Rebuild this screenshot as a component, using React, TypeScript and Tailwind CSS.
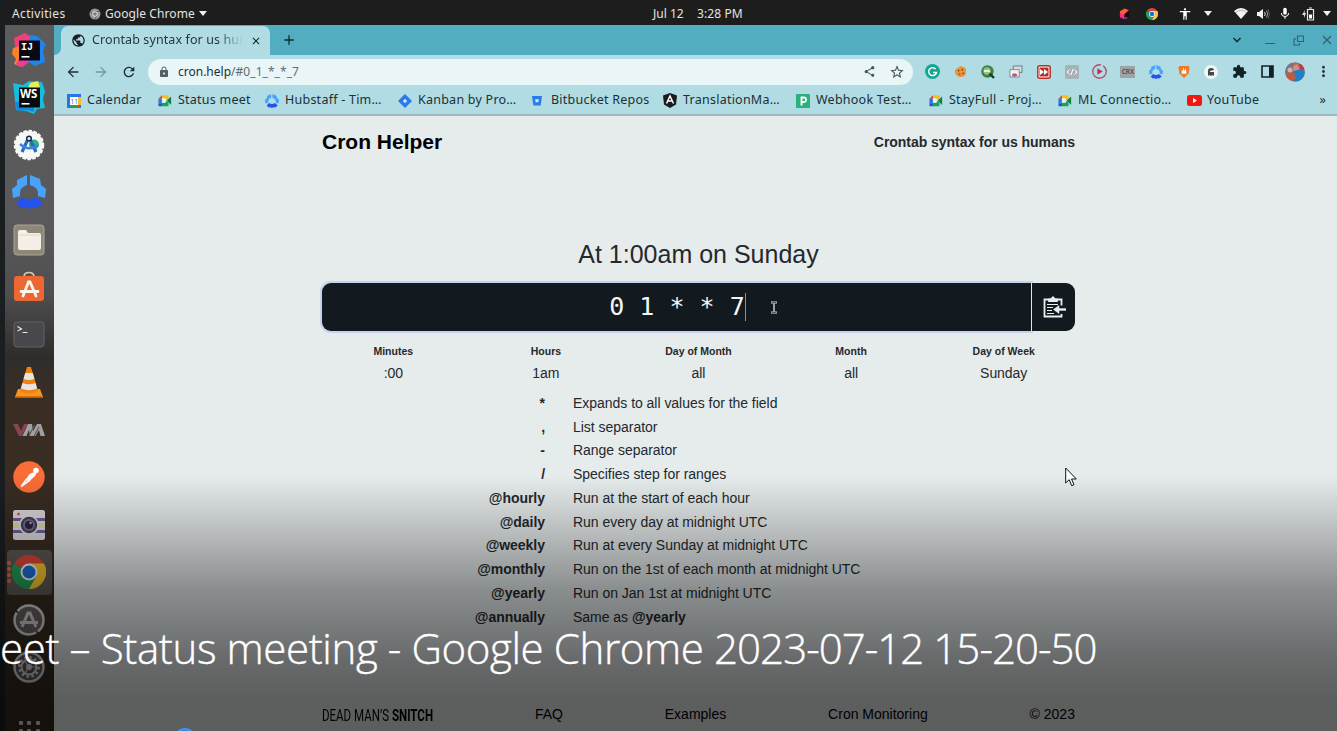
import type { ReactNode } from "react";
import {
  MdArrowBack,
  MdArrowForward,
  MdRefresh,
  MdLock,
  MdShare,
  MdStarOutline,
  MdExtension,
  MdMoreVert,
  MdPublic,
  MdClose,
  MdAdd,
  MdMic,
  MdAccessibility,
} from "react-icons/md";

function Chrome({ className }: { className: string }) {
  return (
    <svg viewBox="0 0 48 48" className={className}>
      <path d="M24 24 3.2 12A24 24 0 0 1 44.8 12Z" fill="#dc4437" />
      <path d="M24 24 44.8 12A24 24 0 0 1 24 48Z" fill="#f9c52b" />
      <path d="M24 24 24 48A24 24 0 0 1 3.2 12Z" fill="#259c57" />
      <path d="M24 12h20.8A24 24 0 0 1 24 48l10.4-18Z" fill="#f9c52b" />
      <path d="M3.2 12 13.6 30 24 36 34.4 30 24 48A24 24 0 0 1 3.2 12Z" fill="#259c57" />
      <circle cx="24" cy="24" r="12" fill="#f4f6f6" />
      <circle cx="24" cy="24" r="9.2" fill="#1b6fd6" />
    </svg>
  );
}

function Hubstaff({ className }: { className: string }) {
  return (
    <svg viewBox="0 0 34 34" className={className}>
      <path d="M15 0 5 5v5L0 14l1 9 7-2q-1-9 7-11Z" fill="#4aa3fb" />
      <path d="M18 0 28 4l1 6 5 4-1 9-7-2q1-9-8-11Z" fill="#4aa3fb" />
      <path d="M4 28 10 22q7 5 14 0l7 6-6 5-4-1-4 2-4-2-4 1Z" fill="#2452ee" />
    </svg>
  );
}

function Meet() {
  return (
    <svg viewBox="0 0 16 14" className="h-[13px] w-[14px]">
      <path d="M4.5 1H12v5H8V4.500H4.500Z" fill="#f7bd16" />
      <path d="M4.500 1v4H.5Z" fill="#e23c31" />
      <path d="M.5 5h4v5h-4Z" fill="#2b76e8" />
      <path d="M.5 10h4v3.500H1.500q-1 0-1-1Z" fill="#155ac0" />
      <path d="M4.500 9.500H8V7l4 2v4.500H4.500Z" fill="#16a358" />
      <path d="M10 7l5-4.500v9.500Z" fill="#0c8044" />
      <path d="M4.500 4.500h4.500v5H4.500Z" fill="#e8f4ee" />
    </svg>
  );
}

function Caret() {
  return (
    <svg viewBox="0 0 8 5" className="h-[5px] w-2">
      <path d="M0 0h8L4 5Z" fill="#f2f2f2" />
    </svg>
  );
}

function Slot({ className, children }: { className: string; children: ReactNode }) {
  return <div className={`flex shrink-0 items-center justify-center ${className}`}>{children}</div>;
}

function TopBar() {
  return (
    <header className="flex h-[25px] shrink-0 items-center rounded-tl-[10px] bg-[#1d1d1d] pt-0.5 font-['Noto_Sans','Open_Sans',sans-serif] text-[12px] text-[#e2e2e2]">
      <span className="w-[84px] pl-[7px] tracking-[0.35px]">Activities</span>
      <svg viewBox="0 0 12 12" className="h-3 w-3">
        <circle cx="6" cy="6" r="5.500" fill="#999" />
        <path d="M6 3.500h5M3.800 7.200 1.500 3M8.200 7.200 6 11" stroke="#555" strokeWidth=".8" />
        <circle cx="6" cy="6" r="2.700" fill="#ddd" />
        <circle cx="6" cy="6" r="1.800" fill="#777" />
      </svg>
      <span className="w-[98px] whitespace-nowrap pl-1 tracking-[0.1px]">Google Chrome</span>
      <Caret />
      <span className="ml-[446px] w-[35px] whitespace-nowrap">Jul 12</span>
      <span className="ml-[9px] whitespace-nowrap tracking-[0.1px]">3:28 PM</span>
      <div className="ml-auto flex items-center">
        <Slot className="w-[28px]">
          <svg viewBox="0 0 12 12" className="h-[12px] w-[11px]">
            <path d="M1 3 6 0l5 2-5 5-5 2Z" fill="#fb5a3c" />
            <path d="M1 5l5 2v5L1 9.500Z" fill="#f22f7e" />
            <path d="M6 6l5-4v7l-5 3Z" fill="#17070f" />
            <path d="M6 9l4 1-4 2Z" fill="#9b39a6" />
          </svg>
        </Slot>
        <Slot className="w-[28px]">
          <Chrome className="h-3 w-3" />
        </Slot>
        <Slot className="w-[38px]">
          <MdAccessibility className="h-[14px] w-[14px] text-white" />
        </Slot>
        <Caret />
        <Slot className="ml-[18px] w-[22px]">
          <svg viewBox="0 0 14 11" className="h-[11px] w-[14px]">
            <path d="M0 3Q7-3 14 3L7 11Z" fill="#f4f4f4" />
            <path d="M1.500 4.500Q7 0 12.500 4.500" stroke="#888" strokeWidth=".6" fill="none" />
          </svg>
        </Slot>
        <Slot className="w-[22px]">
          <svg viewBox="0 0 14 12" className="h-3 w-[14px]" fill="none">
            <path d="M1 4h2l4-3v10L3 8H1Z" fill="#f4f4f4" />
            <path d="M8.500 4q1.500 2 0 4" stroke="#ddd" />
            <path d="M10.500 2.500q2.500 3.500 0 7" stroke="#999" />
            <path d="M12 1q3 5 0 10" stroke="#555" />
          </svg>
        </Slot>
        <Slot className="w-[21px]">
          <MdMic className="h-[15px] w-[14px] text-white" />
        </Slot>
        <Slot className="w-[26px]">
          <svg viewBox="0 0 13 14" className="h-[14px] w-[13px]">
            <path d="M3 3 0 8h2v3l2-5H2.500Z" fill="#ddd" />
            <path d="M5.500 2.500h6v10.500h-6ZM7 1h3" stroke="#e8e8e8" strokeWidth="1.200" fill="none" />
            <path d="M7 7.500h3v4H7Z" fill="#fff" />
          </svg>
        </Slot>
        <div className="mr-[6px] flex w-[10px] justify-end">
          <Caret />
        </div>
      </div>
    </header>
  );
}

const dock: ReactNode[] = [
  <svg viewBox="0 0 34 34" className="h-[34px] w-[34px]">
    <path d="M2 5 13 0l6 4-4 14L4 20Z" fill="#f0407c" />
    <path d="M1 15l8-2 5 18-4 3-8-3 2-5-4-5Z" fill="#fa8030" />
    <path d="M9 22 4 31l6 3 9-6Z" fill="#ea3c9a" />
    <path d="M18 2l7 1 9 8-3 6 2 12-10 4-8-5Z" fill="#1c86ee" />
    <path d="M7 7.500h21v20H7Z" fill="#0b0a12" />
    <text x="9" y="17" fontSize="10" fontWeight="700" fill="#fff" fontFamily="Liberation Mono">IJ</text>
    <path d="M9.500 23h8v1.600h-8Z" fill="#fff" />
  </svg>,
  <svg viewBox="0 0 34 34" className="h-[34px] w-[34px]">
    <path d="M1 3l10 2 6-4 13 1 3 9-2 8 2 9-8 1-3 5-8-3-10-1Z" fill="#18bcdc" />
    <path d="M18 3l8-2 2 7H16Z" fill="#e8ed53" />
    <path d="M3 22l19-1v11l-8-2-9 1Z" fill="#1787dc" />
    <path d="M7 7.500h21v20H7Z" fill="#080b0e" />
    <text x="8" y="18" fontSize="11.500" fontWeight="700" fill="#fff" fontFamily="Open Sans">WS</text>
    <path d="M9.500 23h8v1.600h-8Z" fill="#fff" />
  </svg>,
  <svg viewBox="0 0 32 32" className="h-8 w-8">
    <circle cx="16" cy="16" r="14" fill="#f6f8f8" stroke="#f6f8f8" strokeWidth="2.500" strokeDasharray="3.500 1.500" />
    <circle cx="21" cy="15.500" r="5" fill="#2db875" />
    <path d="M15.500 9 9 23M16.500 9 23 23" stroke="#2b68c5" strokeWidth="3.200" />
    <path d="M7 15q9 8 18 1" stroke="#3985e6" strokeWidth="2.600" fill="none" />
    <circle cx="16" cy="9.500" r="2.300" fill="#dff0f4" stroke="#14303c" strokeWidth="1.500" />
  </svg>,
  <Hubstaff className="h-[34px] w-[34px]" />,
  <svg viewBox="0 0 32 32" className="h-8 w-8">
    <rect x="1" y="1" width="30" height="30" rx="3" fill="#8d8778" stroke="#aaa594" />
    <path d="M5 8q0-2 2-2h6l2 3h11q2 0 2 2v13q0 2-2 2H7q-2 0-2-2Z" fill="#f5efe7" />
    <path d="M6 11h21" stroke="#ddd5ca" />
  </svg>,
  <svg viewBox="0 0 32 32" className="h-8 w-8">
    <path d="M11 6q0-4.500 5-4.500T21 6" stroke="#ddc5a8" strokeWidth="1.700" fill="none" />
    <rect x="1" y="5" width="30" height="25" rx="3" fill="#ed6732" />
    <path d="M10 25 15.500 11h1.500L23 25M8 20.500h17" stroke="#fff5eb" strokeWidth="2.800" strokeLinecap="round" fill="none" />
  </svg>,
  <svg viewBox="0 0 32 28" className="h-7 w-8">
    <rect x="1" y="1" width="30" height="25" rx="3" fill="#47474c" stroke="#626267" />
    <path d="M4.500 5.500 8.500 8 4.500 10M9.500 11.500h5" stroke="#e5e5e5" strokeWidth="1.200" fill="none" />
  </svg>,
  <svg viewBox="0 0 30 34" className="h-[34px] w-[30px]">
    <path d="M4 24h22l3 8H1Z" fill="#f7941e" />
    <path d="M13 2h4l7 24q-9 5-18 0Z" fill="#ef8210" />
    <path d="M11.200 8h7.600l1.700 6q-5.500 2-11 0ZM8.500 18q6.500 2.500 13 0l1.600 5.500q-8 3.500-16.200 0Z" fill="#e7e5e1" />
    <path d="M1 31h28v1.800H1Z" fill="#d56d08" />
  </svg>,
  <svg viewBox="0 0 34 16" className="h-4 w-[34px]">
    <path d="M1 2h5l3 7 3-7h4L9.500 14H7Z" fill="#8a4451" />
    <path d="M10.500 14 16 2h4l1 7 4-7h4l4 12h-4.500L27 8l-3.500 6H18l-1-6-2.500 6Z" fill="#a0a0a2" />
    <path d="M17 14 22.500 3M22 14 27 5" stroke="#5f5f63" strokeWidth="1.200" />
  </svg>,
  <svg viewBox="0 0 32 32" className="h-8 w-8">
    <circle cx="16" cy="16" r="15.700" fill="#fb6d38" />
    <circle cx="23" cy="9.500" r="2.800" fill="#fff" />
    <path d="M21.500 11.500q-4-.5-6.500 3.500l-2 4 3 1.500 6-5.500q1.500-1.500 1-3Z" fill="#fff" />
    <path d="M14 17.500 8.500 25M17 19 8 25.500" stroke="#fff" strokeWidth="1.700" />
  </svg>,
  <svg viewBox="0 0 32 30" className="h-[30px] w-8">
    <rect width="32" height="30" rx="2.500" fill="#d9d7dc" />
    <path d="M0 8h32v3H0ZM0 20h32v3H0Z" fill="#725b99" />
    <path d="M0 13h32v4.500H0Z" fill="#d9d69b" />
    <circle cx="5.500" cy="4" r="1.500" fill="#dc5548" />
    <circle cx="16" cy="15" r="10" fill="#dad9df" />
    <circle cx="16" cy="15" r="8.200" fill="#424052" />
    <circle cx="16" cy="15" r="6" fill="#766792" />
    <circle cx="16" cy="15" r="4" fill="#29243e" />
    <circle cx="17.500" cy="13" r="1.200" fill="#b7a5d4" />
  </svg>,
  <div className="relative flex h-[45px] w-[45px] items-center justify-center rounded-[4px] bg-[#5c5853]">
    <Chrome className="h-[34px] w-[34px]" />
    <div className="absolute left-0 flex flex-col gap-[2px]">
      <i className="h-1 w-1 rounded-full bg-[#dc6a40]" />
      <i className="h-1 w-1 rounded-full bg-[#dc6a40]" />
      <i className="h-1 w-1 rounded-full bg-[#dc6a40]" />
      <i className="h-1 w-1 rounded-full bg-[#dc6a40]" />
    </div>
  </div>,
  <svg viewBox="0 0 32 32" className="h-8 w-8" fill="none">
    <circle cx="16" cy="16" r="14.500" stroke="#d8d8d8" strokeWidth="2.500" fill="#67625f" strokeDasharray="13 2 38 2 36 0" />
    <path d="M9 23 15 9h2l6 14M7 18.500h18" stroke="#d8ced2" strokeWidth="3" />
  </svg>,
  <svg viewBox="0 0 32 32" className="h-8 w-8" fill="none">
    <circle cx="16" cy="16" r="14.500" stroke="#d8d8d8" strokeWidth="2.500" fill="#5a5856" />
    <circle cx="16" cy="16" r="9.500" stroke="#d8d8d8" strokeWidth="3" strokeDasharray="2.500 2.470" />
    <circle cx="16" cy="16" r="7.500" stroke="#d8d8d8" strokeWidth="2" />
    <circle cx="16" cy="16" r="3" fill="#d8d8d8" />
    <path d="M16 16h7M16 16l-4-6M16 16l-4 6" stroke="#d8d8d8" strokeWidth="1.200" />
  </svg>,
];

function Dock() {
  return (
    <nav className="flex w-[49px] shrink-0 flex-col overflow-hidden bg-[linear-gradient(180deg,#5c5c5c_0%,#59595b_28%,#504f50_38%,#2f2d2b_47%,#3a2e24_53%,#36291d_100%)] pt-px">
      {dock.map((icon, i) => (
        <div key={i} className="flex h-[47.500px] shrink-0 items-center justify-center pr-px">
          {icon}
        </div>
      ))}
      <div className="ml-[14px] mt-[30px] grid w-[21px] shrink-0 grid-cols-3 gap-x-[4px] gap-y-[4px]">
        {Array.from({ length: 6 }, (_, i) => (
          <i key={i} className="h-1 w-1 rounded-[1px] bg-[#d4d4d4]" />
        ))}
      </div>
    </nav>
  );
}

function TabStrip() {
  return (
    <div className="flex h-[30px] shrink-0 bg-[#52adc1]">
      <div className="w-[7px] bg-[#b1dce4]">
        <div className="h-full rounded-br-[7px] bg-[#52adc1]" />
      </div>
      <div className="mt-px flex w-[209px] items-center rounded-t-[7px] bg-[#b1dce4] pl-[10px] text-[#26383d]">
        <MdPublic className="h-[15px] w-[15px] text-[#172024]" />
        <span className="ml-[6px] w-[153px] overflow-hidden whitespace-nowrap text-[12.500px] tracking-[0.1px] [mask-image:linear-gradient(90deg,#000_82%,transparent_99%)]">
          Crontab syntax for us humans
        </span>
        <MdClose className="ml-[5px] h-3 w-3 text-[#172024]" />
      </div>
      <div className="flex flex-1 items-center rounded-bl-[7px] bg-[#52adc1]">
        <MdAdd className="ml-[11px] h-4 w-4 text-[#102a30]" />
        <div className="ml-auto flex items-center">
          <Slot className="w-[30px]">
            <svg viewBox="0 0 10 10" className="h-[10px] w-[10px]">
              <path d="M1.500 3 5 6.500 8.500 3" stroke="#15343b" strokeWidth="1.700" fill="none" />
            </svg>
          </Slot>
          <Slot className="w-[36px]">
            <i className="mt-[7px] h-px w-[10px] bg-[#35626c]" />
          </Slot>
          <Slot className="w-[20px]">
            <svg viewBox="0 0 11 11" className="h-[11px] w-[11px]" fill="none" stroke="#35626c" strokeWidth="1.100">
              <path d="M4.500 1h6v5.500h-6ZM3 4H1v6h5.500V8" />
            </svg>
          </Slot>
          <Slot className="mr-[-9px] w-[38px]">
            <svg viewBox="0 0 10 10" className="h-[10px] w-[10px]">
              <path d="M1 1l8 8M9 1 1 9" stroke="#35626c" strokeWidth="1.300" />
            </svg>
          </Slot>
        </div>
      </div>
    </div>
  );
}

const extensions: ReactNode[] = [
  <svg viewBox="0 0 14 14" className="h-[15px] w-[15px]">
    <circle cx="7" cy="7" r="7" fill="#12a78e" />
    <path d="M10 4.800A3.700 3.700 0 1 0 10.700 8H7.500" stroke="#fff" strokeWidth="1.400" fill="none" />
  </svg>,
  <svg viewBox="0 0 14 14" className="h-[13px] w-[13px]">
    <path d="M1 6Q2 3 5 3 6 0 9 2q4 0 4 5 0 6-6 6T1 6Z" fill="#e8953d" />
    <circle cx="5" cy="6" r="1" fill="#7e4318" />
    <circle cx="9" cy="5" r="1" fill="#7e4318" />
    <circle cx="6" cy="10" r="1" fill="#a85b20" />
    <circle cx="10" cy="9" r="1" fill="#7e4318" />
  </svg>,
  <svg viewBox="0 0 14 14" className="h-[14px] w-[14px]">
    <circle cx="6.500" cy="6.500" r="6.200" fill="#37843f" />
    <circle cx="6" cy="6" r="3.700" fill="#99bf85" />
    <path d="M3 6h6" stroke="#e6f2df" strokeWidth="2" />
    <path d="M8.500 8.500 13 13" stroke="#173d20" strokeWidth="2.400" />
  </svg>,
  <svg viewBox="0 0 15 14" className="h-[13px] w-[14px]">
    <path d="M4.500 1h9.500v7H4.500Z" fill="#d5dadd" stroke="#697883" />
    <path d="M1 5h10v8H1Z" fill="#f3f3f3" stroke="#798892" />
    <path d="M3 12a3 3 0 0 1 6 0Z" fill="#df5849" />
    <circle cx="6" cy="11.500" r="1.200" fill="#397cd3" />
  </svg>,
  <svg viewBox="0 0 14 14" className="h-[14px] w-[14px]">
    <rect x=".8" y=".8" width="12.400" height="12.400" rx="2" fill="#fff" stroke="#b62e27" strokeWidth="1.500" />
    <path d="M2.500 2.500h9v9h-9Z" fill="#b62e27" />
    <path d="M3 4l4 3-4 3ZM7 4l4 3-4 3Z" fill="#fff" />
  </svg>,
  <svg viewBox="0 0 14 14" className="h-[14px] w-[14px]" fill="none">
    <rect width="14" height="14" rx="1.500" fill="#a7b2b8" />
    <path d="M4.500 4.500 2 7l2.500 2.500M9.500 4.500 12 7 9.500 9.500M8 4l-2 6" stroke="#fff" />
  </svg>,
  <svg viewBox="0 0 14 14" className="h-[15px] w-[15px]" fill="none">
    <circle cx="7" cy="7" r="6.300" stroke="#b44d67" strokeWidth="1.200" strokeDasharray="31 2" />
    <path d="M5 4l5 3-5 3Z" fill="#c42e4a" />
  </svg>,
  <div className="flex h-3 w-[15px] items-center justify-center bg-[#9ca4a7] text-[6.500px] font-medium text-[#3e4345]">CRX</div>,
  <Hubstaff className="h-[14px] w-[14px]" />,
  <svg viewBox="0 0 12 14" className="h-[13px] w-[12px]">
    <path d="M1 1h10l1 2-1 6-5 5-5-5-1-6Z" fill="#f07a25" />
    <path d="M3.500 6h5v3.500h-5ZM5 3.500h1V6H5ZM7 4h1v2H7Z" fill="#fff" />
  </svg>,
  <svg viewBox="0 0 14 14" className="h-[14px] w-[14px]">
    <circle cx="7" cy="7" r="7" fill="#f1f5f5" />
    <path d="M4 11V6q0-3 3-3t3 2L6 6v1h4v4l-1.500-1L7 11l-1.500-1Z" fill="#41484b" />
  </svg>,
  <MdExtension className="h-[15px] w-[15px] text-[#142124]" />,
  <svg viewBox="0 0 13 13" className="h-[13px] w-[13px]">
    <path d="M1 1h11v11H1Z" stroke="#142124" strokeWidth="1.600" fill="none" />
    <path d="M8 1h4v11H8Z" fill="#142124" />
  </svg>,
  <svg viewBox="0 0 20 20" className="h-5 w-5">
    <clipPath id="avatar">
      <circle cx="10" cy="10" r="9.800" />
    </clipPath>
    <g clipPath="url(#avatar)">
      <path d="M0 0h20v20H0Z" fill="#a96961" />
      <path d="M0 0h7l1 9-8 4Z" fill="#6b7990" />
      <path d="M8 5q4-6 6 1l-1 5H9Z" fill="#d09078" />
      <path d="M9 9q8-3 11 1v6l-8 4-7-3Z" fill="#237fc5" />
      <path d="M3 10l6 1 2 5-3 3-7-4Z" fill="#bc5a42" />
      <path d="M14 2h6v7l-5-2Z" fill="#bc3a44" />
      <circle cx="5" cy="8" r="2.500" fill="#d8b39b" />
    </g>
  </svg>,
  <MdMoreVert className="h-[17px] w-[17px] text-[#233438]" />,
];

function Toolbar() {
  return (
    <div className="flex h-[33px] shrink-0 items-center bg-[#b1dce4] text-[#1e2f34]">
      <Slot className="ml-[4px] w-[29px]">
        <MdArrowBack className="h-4 w-4" />
      </Slot>
      <Slot className="w-[28px]">
        <MdArrowForward className="h-4 w-4 text-[#74979e]" />
      </Slot>
      <Slot className="w-[27px]">
        <MdRefresh className="h-4 w-4" />
      </Slot>
      <div className="ml-[6px] flex h-[26px] w-[766px] items-center rounded-full bg-[#e9f5f7]">
        <MdLock className="ml-[10px] h-3 w-3 text-[#536166]" />
        <span className="ml-[8px] text-[12px]">cron.help</span>
        <span className="text-[12px] tracking-[0.05px] text-[#5d6d72]">/#0_1_*_*_7</span>
        <MdShare className="ml-auto h-[13px] w-[13px] text-[#45545a]" />
        <MdStarOutline className="ml-[13px] mr-[8px] h-4 w-4 text-[#45545a]" />
      </div>
      <div className="ml-[6px] flex">
        {extensions.map((icon, i) => (
          <Slot key={i} className="w-[27.900px]">
            {icon}
          </Slot>
        ))}
      </div>
    </div>
  );
}

function Bookmark({ icon, width, children }: { icon: ReactNode; width: string; children: string }) {
  return (
    <div className={`flex shrink-0 items-center ${width}`}>
      <span className="flex w-[20px] shrink-0">{icon}</span>
      <span className="whitespace-nowrap">{children}</span>
    </div>
  );
}

function Bookmarks() {
  return (
    <div className="flex h-[28px] shrink-0 items-center border-b-2 border-[#9dbbc1] bg-[#b1dce4] pb-px pl-[13px] text-[12.500px] tracking-[0.24px] text-[#1d3035]">
      <Bookmark
        width="w-[91px]"
        icon={
          <svg viewBox="0 0 14 14" className="h-[14px] w-[14px]">
            <path d="M0 0h14v14H0Z" fill="#2974e8" />
            <path d="M11 3h3v8h-3Z" fill="#f4bd28" />
            <path d="M3 11h8v3H3Z" fill="#259e54" />
            <path d="M11 11h3l-3 3Z" fill="#dc4437" />
            <path d="M3 3h8v8H3Z" fill="#fff" />
            <text x="3.500" y="9.500" fontSize="6.500" fill="#2974e8" fontFamily="Roboto" letterSpacing="0">11</text>
          </svg>
        }
      >
        Calendar
      </Bookmark>
      <Bookmark width="w-[107px]" icon={<Meet />}>Status meet</Bookmark>
      <Bookmark width="w-[133px]" icon={<Hubstaff className="h-[14px] w-[14px]" />}>Hubstaff - Tim…</Bookmark>
      <Bookmark
        width="w-[133px]"
        icon={
          <svg viewBox="0 0 14 14" className="h-[14px] w-[14px]">
            <path d="M7 0l7 7-7 7-7-7Z" fill="#2878f0" />
            <path d="M7 4.800 9.200 7 7 9.200 4.800 7Z" fill="#d5e9f4" />
          </svg>
        }
      >
        Kanban by Pro…
      </Bookmark>
      <Bookmark
        width="w-[132px]"
        icon={
          <svg viewBox="0 0 12 12" className="h-[11px] w-[12px]">
            <path d="M.5 1h11L10 11.500H2Z" fill="#287cec" />
            <path d="M4 4.500h4L7.500 8h-3Z" fill="#d6edf5" />
          </svg>
        }
      >
        Bitbucket Repos
      </Bookmark>
      <Bookmark
        width="w-[133px]"
        icon={
          <svg viewBox="0 0 14 15" className="h-[15px] w-[14px]">
            <path d="M7 0l7 2.500-1 9L7 15l-6-3.500-1-9Z" fill="#191b1c" />
            <path d="M3.500 10.500 7 3l3.500 7.500M5 8h4" stroke="#fff" strokeWidth="1.500" fill="none" />
          </svg>
        }
      >
        TranslationMa…
      </Bookmark>
      <Bookmark
        width="w-[133px]"
        icon={
          <svg viewBox="0 0 14 14" className="h-[14px] w-[14px]">
            <rect width="14" height="14" rx="1" fill="#2bb17c" />
            <path d="M5.500 11.500v-8H8q2 0 2 2.300T8 8H6" stroke="#fff" strokeWidth="1.800" fill="none" />
          </svg>
        }
      >
        Webhook Test…
      </Bookmark>
      <Bookmark width="w-[129px]" icon={<Meet />}>StayFull - Proj…</Bookmark>
      <Bookmark width="w-[129px]" icon={<Meet />}>ML Connectio…</Bookmark>
      <Bookmark
        width="w-[80px]"
        icon={
          <svg viewBox="0 0 15 11" className="h-[11px] w-[15px]">
            <rect width="15" height="11" rx="2.500" fill="#f3180d" />
            <path d="M6 3l4 2.500L6 8Z" fill="#fff" />
          </svg>
        }
      >
        YouTube
      </Bookmark>
      <span className="ml-auto mr-[11px]">»</span>
    </div>
  );
}

const fields = [
  ["Minutes", ":00"],
  ["Hours", "1am"],
  ["Day of Month", "all"],
  ["Month", "all"],
  ["Day of Week", "Sunday"],
];

const rules: [string, ReactNode][] = [
  ["*", "Expands to all values for the field"],
  [",", "List separator"],
  ["-", "Range separator"],
  ["/", "Specifies step for ranges"],
  ["@hourly", "Run at the start of each hour"],
  ["@daily", "Run every day at midnight UTC"],
  ["@weekly", "Run at every Sunday at midnight UTC"],
  ["@monthly", "Run on the 1st of each month at midnight UTC"],
  ["@yearly", "Run on Jan 1st at midnight UTC"],
  ["@annually", <>Same as <b>@yearly</b></>],
];

function CronPage() {
  return (
    <main className="flex flex-1 flex-col bg-[#e6ebec] pl-[268px] font-['Liberation_Sans',Arial,sans-serif] text-[#24292d]">
      <div className="flex h-[753px] w-[753px] flex-col">
        <div className="flex h-[52px] shrink-0 items-center justify-between">
          <h1 className="text-[21px] font-bold text-black">Cron Helper</h1>
          <span className="text-[14px] font-bold tracking-[-0.04px]">Crontab syntax for us humans</span>
        </div>
        <h2 className="mt-[69px] h-[34px] shrink-0 text-center text-[25px] leading-[34px]">At 1:00am on Sunday</h2>
        <div className="mt-[12px] flex h-[48px] shrink-0">
          <div className="flex w-[709px] items-center justify-center rounded-l-[9px] bg-[#121a20] pb-px pl-[2px] font-['DejaVu_Sans_Mono',monospace] text-[25px] text-[#f4f6f6] shadow-[0_0_0_2px_#c5d4ec]">
            <span className="whitespace-pre">0 1 * * 7</span>
            <i className="h-[28px] w-px bg-[#8c9194]" />
          </div>
          <div className="flex flex-1 items-center justify-center rounded-r-[9px] border-l border-[#dfe5e8] bg-[#121a20]">
            <svg viewBox="0 0 24 22" className="h-[22px] w-[24px]" fill="none" stroke="#e8edef">
              <path d="M19.500 9.500V3.500h-17v17h17V18" strokeWidth="1.800" />
              <path d="M6.500 5.500V3h2.500q2-4.500 4 0h2.500v2.500Z" fill="#e8edef" />
              <path d="M5 8.500h11M5 11.500h6M5 14.500h5M5 17.500h7" strokeWidth="1.200" />
              <path d="M24 13.500h-8" strokeWidth="2.400" />
              <path d="M17 9.500v8l-5.500-4Z" fill="#e8edef" strokeWidth=".5" />
            </svg>
          </div>
        </div>
        <div className="mt-[12px] grid shrink-0 grid-cols-5 gap-x-[10px] text-center">
          {fields.map(([name, value]) => (
            <div key={name} className="flex flex-col">
              <b className="text-[10.500px] leading-4">{name}</b>
              <span className="mt-[5px] text-[14px] leading-[18px] tracking-[-0.05px]">{value}</span>
            </div>
          ))}
        </div>
        <dl className="mt-[9.500px] shrink-0 text-[14px] tracking-[-0.03px]">
          {rules.map(([key, text]) => (
            <div key={key} className="flex h-[23.750px] items-center gap-[28px]">
              <dt className="w-[223px] text-right font-bold">{key}</dt>
              <dd className="whitespace-nowrap">{text}</dd>
            </div>
          ))}
        </dl>
        <footer className="mt-[73.500px] flex h-[24px] shrink-0 items-center justify-between text-[14px] text-black">
          <div className="h-[20px] w-[111px] whitespace-nowrap font-['Roboto',sans-serif] text-[16px] leading-[22px]">
            <span className="inline-block origin-left scale-x-[0.72]">
              DEAD MAN’S <b>SNITCH</b>
            </span>
          </div>
          <span>FAQ</span>
          <span>Examples</span>
          <span>Cron Monitoring</span>
          <span>© 2023</span>
        </footer>
      </div>
    </main>
  );
}

export default function App() {
  return (
    <div className="relative h-[731px] w-[1337px] overflow-hidden bg-[#1b1e21] pl-[5px]">
      <div className="flex h-full flex-col">
        <TopBar />
        <div className="flex h-[706px]">
          <Dock />
          <div className="flex h-full flex-1 flex-col overflow-hidden font-['Noto_Sans','Open_Sans',sans-serif]">
            <TabStrip />
            <Toolbar />
            <Bookmarks />
            <CronPage />
          </div>
        </div>
      </div>

      <svg viewBox="0 0 8 12" className="absolute left-[770px] top-[301px] h-[13px] w-[8px]">
        <path d="M1 1h6M4 1v10M1 11h6" stroke="#d5dbde" strokeWidth="2" />
        <path d="M1.500 1h5M4 1v10M1.500 11h5" stroke="#121a20" strokeWidth=".6" />
      </svg>
      <svg viewBox="0 0 12 20" className="absolute left-[1065px] top-[467px] h-[20px] w-[12px]">
        <path d="M.7 1v15l3.500-3.300 2.500 6 2.300-1-2.500-5.700h4.800Z" fill="#fff" stroke="#111" />
      </svg>

      <div className="absolute inset-x-0 bottom-0 h-[256px] bg-[linear-gradient(180deg,rgba(0,0,0,0)_0%,rgba(0,0,0,0.4)_45%,rgba(0,0,0,0.55)_72%,rgba(0,0,0,0.6)_88%,rgba(0,0,0,0.6)_100%)]" />
      <div className="absolute left-0 top-[618px] whitespace-pre font-['Open_Sans','Noto_Sans',sans-serif] text-[42px] font-light leading-[60px] tracking-[-0.38px] text-white [-webkit-text-stroke:0.4px_#fff]">
        eet – Status meeting - Google Chrome <span className="tracking-[-0.95px]">2023-07-12 15-20-50</span>
      </div>
      <i className="absolute left-[174px] top-[728px] h-[22px] w-[22px] rounded-full border-2 border-[#3f9be6] bg-[#2c80cf]" />
    </div>
  );
}
